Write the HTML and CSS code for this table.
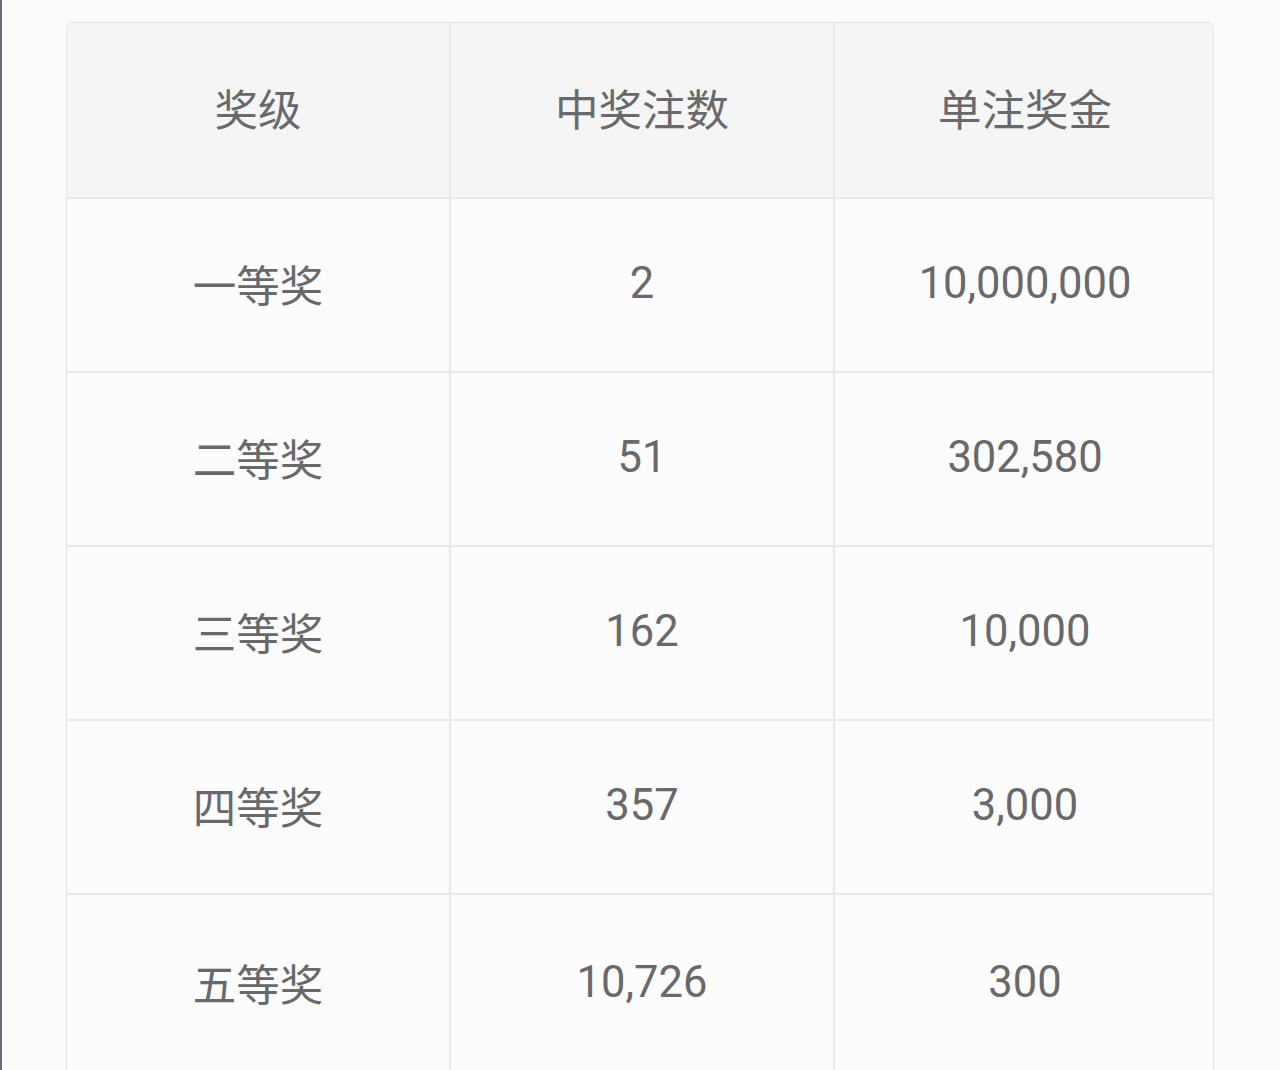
FILE: index.html
```html
<!DOCTYPE html>
<html lang="zh">
<head>
<meta charset="utf-8">
<link rel="stylesheet" href="styles.css">
</head>
<body>
<div class="page">
  <div class="table">
    <div class="cell head">奖级</div>
    <div class="cell head">中奖注数</div>
    <div class="cell head last">单注奖金</div>

    <div class="cell">一等奖</div>
    <div class="cell">2</div>
    <div class="cell last">10,000,000</div>

    <div class="cell">二等奖</div>
    <div class="cell">51</div>
    <div class="cell last">302,580</div>

    <div class="cell">三等奖</div>
    <div class="cell">162</div>
    <div class="cell last">10,000</div>

    <div class="cell">四等奖</div>
    <div class="cell">357</div>
    <div class="cell last">3,000</div>

    <div class="cell">五等奖</div>
    <div class="cell">10,726</div>
    <div class="cell last">300</div>
  </div>
</div>
</body>
</html>
```
FILE: styles.css
```css
html, body {
  margin: 0;
  padding: 0;
  height: 100%;
  overflow: hidden;
}
body {
  background: #fbfbfc;
  font-family: Roboto, "Noto Sans CJK SC", sans-serif;
}
.page {
  height: 1070px;
  border-left: 2px solid #6b6e74;
  padding: 22px 0 0 64px;
  box-sizing: border-box;
}
.table {
  width: 1148px;
  display: grid;
  grid-template-columns: 384px 384px 380px;
  grid-template-rows: 176px repeat(4, 174px) 190px;
  border: 1px solid #e4e4e6;
  border-radius: 7px 7px 0 0;
  overflow: hidden;
  background: #fcfcfd;
  box-sizing: border-box;
}
.cell {
  display: flex;
  align-items: center;
  justify-content: center;
  font-size: 43.5px;
  color: #69696c;
  border-right: 2px solid #e8e8ea;
  border-bottom: 2px solid #e8e8ea;
  padding-bottom: 4px;
  box-sizing: border-box;
}
.cell:nth-last-child(-n+3) {
  padding-bottom: 14px;
}
.cell.last {
  border-right: none;
}
.head {
  background: #f5f5f6;
  padding-bottom: 6px;
}
```
